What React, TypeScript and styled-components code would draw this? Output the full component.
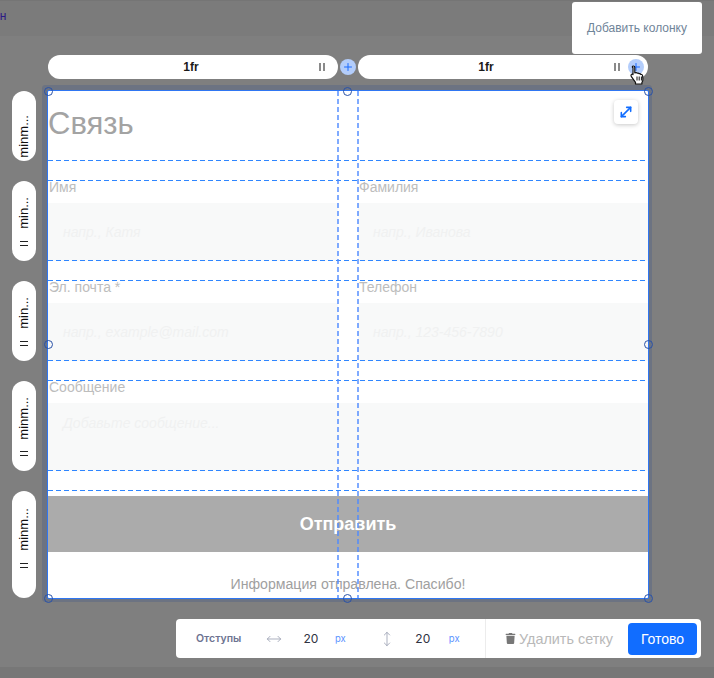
import React from "react";
import styled, { createGlobalStyle } from "styled-components";
import { MoveDiagonal, MoveHorizontal, MoveVertical, Plus } from "lucide-react";
import { FaTrash } from "react-icons/fa";

const Global = createGlobalStyle`
  html, body { margin: 0; padding: 0; background: #7f7f7f; }
  * { box-sizing: border-box; }
`;

const ROWS = [70, 80, 80, 90, 107];
const rowTemplate = ROWS.map((r) => `${r}px`).join(" ");

const Page = styled.div`
  position: relative;
  width: 714px;
  height: 678px;
  overflow: hidden;
  display: flex;
  flex-direction: column;
  background: #7f7f7f;
  font-family: "Liberation Sans", Arial, sans-serif;
`;

const TopBar = styled.div`
  height: 36px;
  flex: none;
  background: #7b7b7b;
  border-top: 1px solid #757575;
  padding-top: 8px;
  font-size: 12px;
  line-height: 14px;
  color: #2c1a86;
  text-indent: -7px;
`;

const Popover = styled.div`
  position: absolute;
  left: 572px;
  top: 2px;
  width: 130px;
  height: 52px;
  background: #fff;
  border-radius: 3px;
  display: flex;
  align-items: center;
  justify-content: center;
  font-size: 12px;
  color: #6f8499;
`;

const Workspace = styled.div`
  display: grid;
  grid-template-columns: 24px 600px;
  grid-template-rows: 24px 507px;
  column-gap: 12px;
  row-gap: 12px;
  padding: 19px 0 0 12px;
`;

const ColumnBar = styled.div`
  grid-column: 2;
  display: flex;
  align-items: center;
  gap: 2px;
`;

const ColumnPill = styled.div<{ $pl: number; $pr: number }>`
  flex: none;
  width: 290px;
  height: 24px;
  border-radius: 12px;
  background: #fff;
  display: flex;
  align-items: center;
  padding: 0 ${(p) => p.$pr}px 0 ${(p) => p.$pl}px;
`;

const ColumnLabel = styled.div`
  flex: 1;
  text-align: center;
  font-size: 12px;
  font-weight: 700;
  color: #1a1a1a;
`;

const PauseIcon = styled.span`
  flex: none;
  width: 6px;
  height: 8px;
  border-left: 2px solid #8a8a8a;
  border-right: 2px solid #8a8a8a;
`;

const AddCircle = styled.span<{ $ml?: number }>`
  flex: none;
  width: 16px;
  height: 16px;
  margin-left: ${(p) => p.$ml ?? 0}px;
  border-radius: 50%;
  background: #b3cdfb;
  color: #1a6bff;
  display: flex;
  align-items: center;
  justify-content: center;
`;

const RowBar = styled.div`
  grid-column: 1;
  grid-row: 2;
  display: flex;
  flex-direction: column;
  gap: 20px;
`;

const RowPill = styled.div<{ $h: number; $top: number }>`
  position: relative;
  height: ${(p) => p.$h}px;
  width: 24px;
  border-radius: 12px;
  background: #fff;
  padding-top: ${(p) => p.$top}px;
  display: flex;
  justify-content: center;
`;

const RowLabel = styled.div`
  writing-mode: vertical-rl;
  transform: rotate(180deg);
  font-size: 13px;
  line-height: 14px;
  color: #111;
  white-space: nowrap;
  height: fit-content;
`;

const RowGrip = styled.span<{ $bottom: number }>`
  position: absolute;
  left: 8px;
  bottom: ${(p) => p.$bottom}px;
  width: 8px;
  height: 5px;
  border-top: 1px solid #222;
  border-bottom: 1px solid #222;
`;

const GridFrame = styled.div`
  grid-column: 2;
  grid-row: 2;
  position: relative;
  background: #fff;
  border-radius: 1px;
  box-shadow: 0 0 0 1px #2f76f2, -1px -1px 0 5px #6c7382, 1px 1px 0 3px #767a82;
`;

const FormGrid = styled.div`
  display: grid;
  grid-template-columns: 290px 290px;
  grid-template-rows: ${rowTemplate};
  column-gap: 20px;
  row-gap: 20px;
  height: 100%;
`;

const Title = styled.h1`
  grid-column: 1 / 3;
  margin: 0;
  display: flex;
  align-items: center;
  font-size: 31px;
  font-weight: 400;
  color: #a3a3a3;
  height: 66px;
`;

const Field = styled.div<{ $wide?: boolean }>`
  grid-column: ${(p) => (p.$wide ? "1 / 3" : "auto")};
  display: flex;
  flex-direction: column;
`;

const Label = styled.label`
  height: 22px;
  flex: none;
  padding-left: 1px;
  font-size: 14px;
  line-height: 12px;
  color: #bdbdbd;
`;

const Input = styled.div<{ $top?: boolean }>`
  flex: 1;
  display: flex;
  align-items: ${(p) => (p.$top ? "flex-start" : "center")};
  padding: ${(p) => (p.$top ? "12px" : "0")} 15px 0;
  background: #f8f9f9;
  font-size: 14px;
  font-style: italic;
  color: #f0f1f1;
`;

const Footer = styled.div`
  grid-column: 1 / 3;
  display: flex;
  flex-direction: column;
  align-items: center;
  padding-top: 5px;
`;

const SubmitButton = styled.div`
  width: 100%;
  height: 56px;
  flex: none;
  background: #ababab;
  color: #fff;
  font-size: 18px;
  font-weight: 700;
  display: flex;
  align-items: center;
  justify-content: center;
`;

const Note = styled.div`
  margin-top: 24px;
  font-size: 14.12px;
  line-height: 16px;
  color: #a0a0a0;
`;

const Guides = styled.div`
  position: absolute;
  inset: 0;
  pointer-events: none;
`;

const GuideRows = styled.div`
  position: absolute;
  left: 0;
  right: 3px;
  top: -1px;
  display: flex;
  flex-direction: column;
  gap: 19px;
`;

const dashX = "linear-gradient(to right, #2f86ff 0 5px, transparent 5px 8px)";

const GuideRow = styled.div<{ $h: number; $first: boolean; $last: boolean }>`
  height: ${(p) => p.$h + 1}px;
  background-image: ${(p) => (p.$first ? "none" : dashX)}, ${(p) => (p.$last ? "none" : dashX)};
  background-size: 8px 1px;
  background-repeat: repeat-x;
  background-position: left top, left bottom;
`;

const GuideColumn = styled.div<{ $x: number }>`
  position: absolute;
  top: 0;
  bottom: 0;
  left: ${(p) => p.$x}px;
  width: 2px;
  background-image: linear-gradient(to bottom, rgba(78, 138, 255, 0.72) 0 5px, transparent 5px 8px);
  background-size: 2px 8px;
  background-repeat: repeat-y;
`;

const Ring = styled.span<{ $x: number; $y: number }>`
  position: absolute;
  left: ${(p) => p.$x - 4.5}px;
  top: ${(p) => p.$y - 4.5}px;
  width: 9px;
  height: 9px;
  border-radius: 50%;
  border: 1.4px solid #2a52a8;
`;

const ExpandButton = styled.div`
  position: absolute;
  left: 566px;
  top: 9px;
  width: 24px;
  height: 24px;
  background: #fff;
  border-radius: 4px;
  box-shadow: 0 1px 4px rgba(0, 0, 0, 0.22);
  color: #116dff;
  display: flex;
  align-items: center;
  justify-content: center;
`;

const Cursor = styled.svg`
  position: absolute;
  left: 630px;
  top: 65px;
`;

const Toolbar = styled.div`
  align-self: flex-end;
  margin: 21px 13px 0 0;
  width: 525px;
  height: 39px;
  flex: none;
  background: #fff;
  border-radius: 4px;
  display: flex;
  align-items: center;
  font-family: Inter, "Liberation Sans", sans-serif;
`;

const SpacingGroup = styled.div`
  width: 310px;
  height: 100%;
  flex: none;
  display: flex;
  align-items: center;
  padding-left: 20px;
  border-right: 1px solid #ececec;
`;

const SpacingTitle = styled.span`
  width: 46px;
  flex: none;
  font-size: 10.5px;
  font-weight: 600;
  color: #6d7391;
  white-space: nowrap;
`;

const AxisIcon = styled.span<{ $ml: number }>`
  margin-left: ${(p) => p.$ml}px;
  width: 16px;
  flex: none;
  display: flex;
  justify-content: center;
  color: #9ea3b5;
`;

const Value = styled.span<{ $ml: number }>`
  width: 22px;
  margin-left: ${(p) => p.$ml}px;
  flex: none;
  text-align: center;
  font-size: 12px;
  color: #2f3342;
`;

const Unit = styled.span<{ $ml: number }>`
  margin-left: ${(p) => p.$ml}px;
  flex: none;
  font-size: 9.5px;
  color: #5b93ff;
`;

const DeleteAction = styled.div`
  margin-left: 19px;
  width: 107px;
  flex: none;
  display: flex;
  align-items: center;
  gap: 3px;
  font-family: "Liberation Sans", sans-serif;
  font-size: 14.4px;
  color: #b9b9b9;
  white-space: nowrap;
`;

const DeleteIcon = styled.span`
  display: flex;
  color: #777;
`;

const DoneButton = styled.div`
  margin-left: 16px;
  width: 69px;
  height: 32px;
  flex: none;
  border-radius: 4px;
  background: #116dff;
  color: #fff;
  font-family: "Liberation Sans", sans-serif;
  font-size: 14px;
  display: flex;
  align-items: center;
  justify-content: center;
`;

const BottomStrip = styled.div`
  margin-top: 9px;
  flex: 1;
  background: #777;
`;

const rowHandles = [
  { h: 70, top: 24, label: "minm...", grip: false, bottom: 0 },
  { h: 80, top: 16, label: "min...", grip: true, bottom: 15 },
  { h: 80, top: 16, label: "min...", grip: true, bottom: 15 },
  { h: 90, top: 16, label: "minm...", grip: true, bottom: 15 },
  { h: 107, top: 17, label: "minm...", grip: true, bottom: 30 },
];

const rings: [number, number][] = [
  [0, 0], [299, 0], [600, 0],
  [0, 253], [600, 253],
  [0, 507], [299, 507], [600, 507],
];

export default function App() {
  return (
    <Page>
      <Global />
      <TopBar>он</TopBar>
      <Workspace>
        <ColumnBar>
          <ColumnPill $pl={15} $pr={13}>
            <ColumnLabel>1fr</ColumnLabel>
            <PauseIcon />
          </ColumnPill>
          <AddCircle>
            <Plus size={12} strokeWidth={2} />
          </AddCircle>
          <ColumnPill $pl={0} $pr={4}>
            <ColumnLabel>1fr</ColumnLabel>
            <PauseIcon />
            <AddCircle $ml={8}>
              <Plus size={12} strokeWidth={2} />
            </AddCircle>
          </ColumnPill>
        </ColumnBar>
        <RowBar>
          {rowHandles.map((r, i) => (
            <RowPill key={i} $h={r.h} $top={r.top}>
              <RowLabel>{r.label}</RowLabel>
              {r.grip && <RowGrip $bottom={r.bottom} />}
            </RowPill>
          ))}
        </RowBar>
        <GridFrame>
          <FormGrid>
            <Title>Связь</Title>
            <Field>
              <Label>Имя</Label>
              <Input>напр., Катя</Input>
            </Field>
            <Field>
              <Label>Фамилия</Label>
              <Input>напр., Иванова</Input>
            </Field>
            <Field>
              <Label>Эл. почта *</Label>
              <Input>напр., example@mail.com</Input>
            </Field>
            <Field>
              <Label>Телефон</Label>
              <Input>напр., 123-456-7890</Input>
            </Field>
            <Field $wide>
              <Label>Сообщение</Label>
              <Input $top>Добавьте сообщение...</Input>
            </Field>
            <Footer>
              <SubmitButton>Отправить</SubmitButton>
              <Note>Информация отправлена. Спасибо!</Note>
            </Footer>
          </FormGrid>
          <Guides>
            <GuideRows>
              {ROWS.map((h, i) => (
                <GuideRow key={i} $h={h} $first={i === 0} $last={i === ROWS.length - 1} />
              ))}
            </GuideRows>
            <GuideColumn $x={289} />
            <GuideColumn $x={309} />
          </Guides>
          {rings.map(([x, y], i) => (
            <Ring key={i} $x={x} $y={y} />
          ))}
          <ExpandButton>
            <MoveDiagonal size={16} strokeWidth={2.4} />
          </ExpandButton>
        </GridFrame>
      </Workspace>
      <Toolbar>
        <SpacingGroup>
          <SpacingTitle>Отступы</SpacingTitle>
          <AxisIcon $ml={24}>
            <MoveHorizontal size={16} strokeWidth={1.3} />
          </AxisIcon>
          <Value $ml={18}>20</Value>
          <Unit $ml={13}>px</Unit>
          <AxisIcon $ml={33}>
            <MoveVertical size={16} strokeWidth={1.3} />
          </AxisIcon>
          <Value $ml={17}>20</Value>
          <Unit $ml={15}>px</Unit>
        </SpacingGroup>
        <DeleteAction>
          <DeleteIcon>
            <FaTrash size={11} />
          </DeleteIcon>
          Удалить сетку
        </DeleteAction>
        <DoneButton>Готово</DoneButton>
      </Toolbar>
      <BottomStrip />
      <Popover>Добавить колонку</Popover>
      <Cursor width="16" height="20" viewBox="0 0 16 20">
        <path
          d="M3.300 1c.9 0 1.500.6 1.500 1.500v5.300l1-.2c.7-.1 1.200.1 1.500.6.7-.3 1.400-.1 1.800.5.7-.2 1.400 0 1.700.7.900-.2 1.700.4 1.800 1.300l.3 3.200c.1 1.500-.3 2.700-1 3.700V19H5.500v-1.700L1.400 11.600c-.6-.8-.5-1.700.1-2.100.5-.4 1.100-.3 1.500.1V2.500C1.800 2.300 2.400 1 3.300 1z"
          fill="#fff"
          stroke="#111"
          strokeWidth="1.2"
          strokeLinejoin="round"
        />
        <path d="M7 11.500v4M9.200 11.500v4M11.400 11.500v4" stroke="#111" strokeWidth="1" />
      </Cursor>
    </Page>
  );
}
